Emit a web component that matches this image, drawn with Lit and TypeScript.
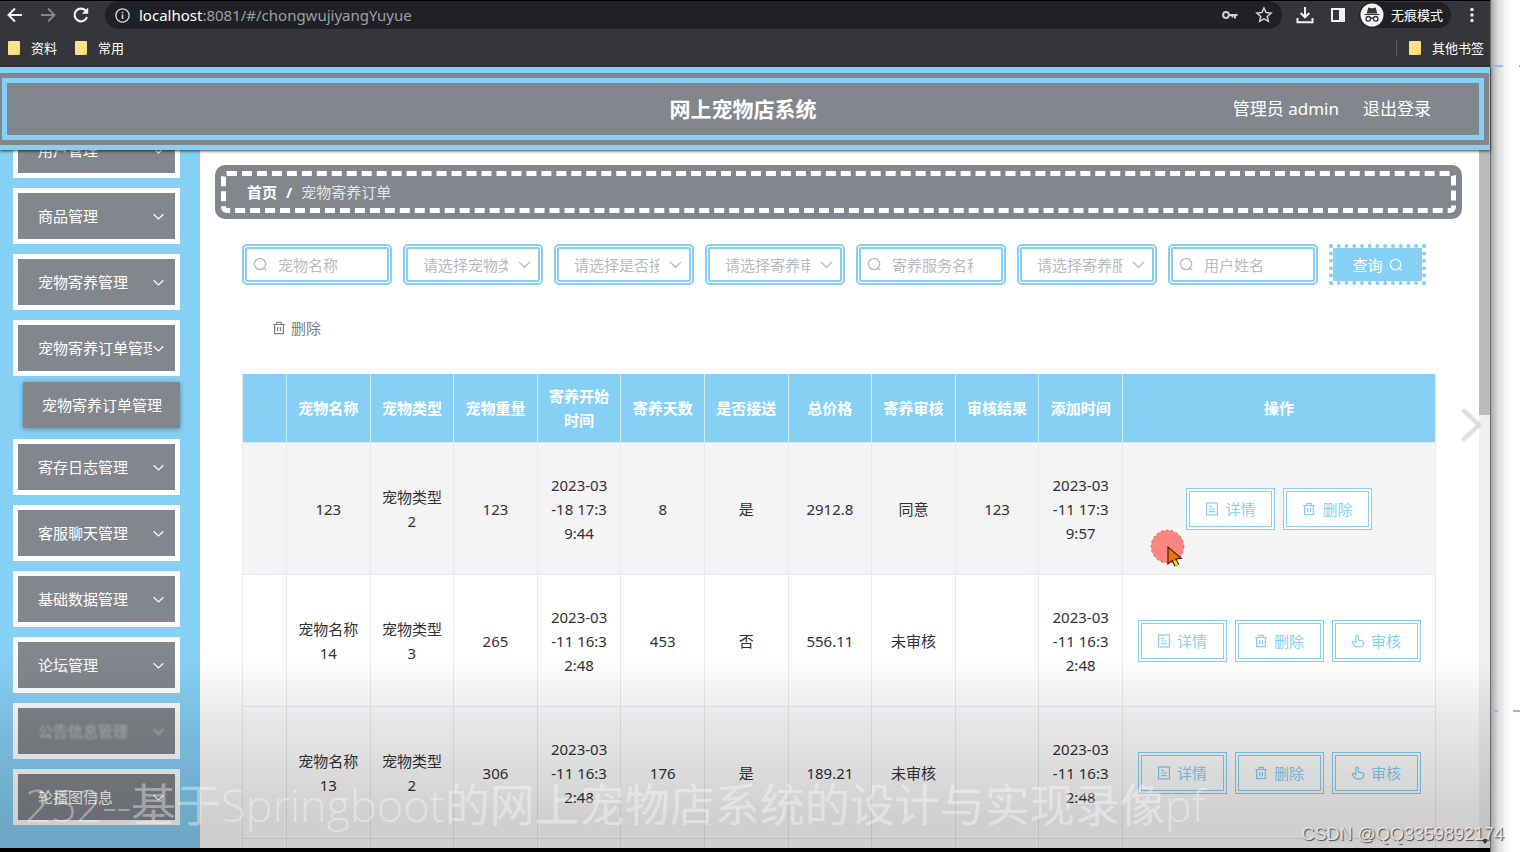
import { LitElement, html, css, svg } from "lit";
import { customElement, property } from "lit/decorators.js";

type Glyph = "search" | "trash" | "doc" | "point" | "down";

const glyphs = {
  search: svg`<circle cx="7.5" cy="7.5" r="6"/><path d="M11.6 11.6 14.2 14.2"/>`,
  trash: svg`<path d="M1 4h14M3 4v10.500h10V4M5.500 4V1.500h5V4M6.400 6.800v4.800M9.600 6.800v4.800"/>`,
  doc: svg`<rect x="1.800" y="1.200" width="12.400" height="13.600"/><path d="M4.800 5h3M4.800 8h6.400M4.800 11h6.400"/>`,
  point: svg`<path d="M5.600 9.800V2.600a1.400 1.400 0 0 1 2.800 0V7l4.600.9c1.200.3 1.800 1 1.600 2.200l-.6 2.600c-.3 1.200-1 1.900-2.200 1.900H6.600c-1 0-1.700-.3-2.300-1.100L1.600 9.800c-.5-.8.4-1.900 1.400-1.500z"/>`,
  down: svg`<path d="M2 5.200 8 11l6-5.800"/>`,
};

@customElement("line-icon")
class LineIcon extends LitElement {
  static styles = css`
    :host { display: inline-flex; flex: none; width: 14px; height: 14px; }
    svg { width: 100%; height: 100%; fill: none; stroke: currentColor; stroke-width: 1.4; }
  `;
  @property() name: Glyph = "search";
  render() {
    return html`<svg viewBox="0 0 16 16" aria-hidden="true">${glyphs[this.name]}</svg>`;
  }
}

interface Order {
  name: string[];
  type: string[];
  weight: string;
  start: string[];
  days: string;
  pickup: string;
  total: string;
  status: string;
  result: string;
  added: string[];
  review: boolean;
}

const orders: Order[] = [
  { name: ["123"], type: ["宠物类型", "2"], weight: "123", start: ["2023-03", "-18 17:3", "9:44"], days: "8", pickup: "是", total: "2912.8", status: "同意", result: "123", added: ["2023-03", "-11 17:3", "9:57"], review: false },
  { name: ["宠物名称", "14"], type: ["宠物类型", "3"], weight: "265", start: ["2023-03", "-11 16:3", "2:48"], days: "453", pickup: "否", total: "556.11", status: "未审核", result: "", added: ["2023-03", "-11 16:3", "2:48"], review: true },
  { name: ["宠物名称", "13"], type: ["宠物类型", "2"], weight: "306", start: ["2023-03", "-11 16:3", "2:48"], days: "176", pickup: "是", total: "189.21", status: "未审核", result: "", added: ["2023-03", "-11 16:3", "2:48"], review: true },
];

const columns: string[][] = [
  ["宠物名称"], ["宠物类型"], ["宠物重量"], ["寄养开始", "时间"], ["寄养天数"],
  ["是否接送"], ["总价格"], ["寄养审核"], ["审核结果"], ["添加时间"],
];

const filters = [
  { kind: "text", label: "宠物名称" },
  { kind: "select", label: "请选择宠物类型" },
  { kind: "select", label: "请选择是否接送" },
  { kind: "select", label: "请选择寄养审核" },
  { kind: "text", label: "寄养服务名称" },
  { kind: "select", label: "请选择寄养服务" },
  { kind: "text", label: "用户姓名" },
];

const menuTop = ["用户管理", "商品管理", "宠物寄养管理", "宠物寄养订单管理"];
const menuBottom = ["寄存日志管理", "客服聊天管理", "基础数据管理", "论坛管理", "公告信息管理", "轮播图信息"];

const lines = (parts: string[]) => parts.map((p, i) => (i ? html`<br />${p}` : p));

@customElement("app-root")
class AppRoot extends LitElement {
  static styles = css`
    :host {
      --sky: #87d0f5;
      --steel: #82878d;
      display: block;
      height: 100vh;
      overflow: hidden;
      font-family: "Noto Sans", "Noto Sans CJK SC", sans-serif;
      font-size: 15px;
      line-height: 24px;
      color: #303236;
    }
    * { box-sizing: border-box; }
    button, input, select { font: inherit; margin: 0; }
    button { cursor: pointer; }
    a { color: inherit; text-decoration: none; }

    .stage { position: relative; display: grid; grid-template-columns: minmax(0, 1fr) 30px; height: 100%; background: #fff; }
    .window { display: flex; flex-direction: column; min-width: 0; min-height: 0; background: #fff; border-bottom: 4px solid #000; }
    .margin { position: relative; border-left: 1px solid #6b6b6b; background: linear-gradient(90deg, #a8a8a8, #dcdcdc 7px, #f6f6f6 15px, #fff 22px); }
    .dash { position: absolute; height: 2px; background: #a3b6e6; }
    .dash.a { top: 65px; left: 2px; width: 10px; }
    .dash.b { top: 65px; right: 0; width: 1px; }
    .dash.c { top: 710px; left: 0; width: 7px; }
    .dash.d { top: 710px; right: 0; width: 7px; }

    .chrome { flex: none; background: #35363a; color: #fff; border-top: 1px solid #000; height: 67px; font-size: 13px; }
    .toolbar { display: flex; align-items: center; height: 28px; padding: 0 9px 0 6px; }
    .tool { display: inline-flex; align-items: center; justify-content: center; padding: 0; border: 0; background: none; color: #f1f1f1; width: 18px; height: 18px; }
    .tool svg { width: 18px; height: 18px; }
    .nav { display: flex; gap: 15px; }
    .nav .off { color: #85868a; }
    .pill { display: flex; align-items: center; flex: 1; height: 28px; margin: 0 14px 0 15px; padding: 0 9px; border-radius: 14px; background: #202124; gap: 8px; color: #d5d6d8; }
    .pill .tool { color: #d0d1d3; }
    .pill .star { margin-left: 8px; }
    .url { flex: 1; min-width: 0; border: 0; background: none; padding: 0; color: #9aa0a6; font-size: 15px; white-space: nowrap; }
    .url b { font-weight: 400; color: #fff; }
    .right { display: flex; align-items: center; gap: 15px; }
    .incognito { display: flex; align-items: center; gap: 7px; height: 26px; padding: 0 8px 0 1px; border-radius: 13px; background: #202124; }
    .incognito svg { width: 24px; height: 24px; }
    .right .incognito { margin-left: -3px; }
    .right .more { margin-left: -3px; }
    .marks { display: flex; align-items: center; height: 38px; padding: 0 6px 0 8px; gap: 18px; }
    .mark { display: flex; align-items: center; gap: 11px; }
    .mark i { width: 12px; height: 14px; border-radius: 1px; background: linear-gradient(135deg, #ffe287 70%, #f3c74e); }
    .other { margin-left: auto; border-left: 1px solid #5d5e62; padding-left: 12px; height: 16px; }

    .banner { flex: none; position: relative; z-index: 2; border: solid var(--sky); border-width: 6px 1px 5px 0; background: var(--steel); padding: 5px 5px 5px 2px; box-shadow: 0 1px 3px rgba(0, 0, 0, 0.75); }
    .banner-in { display: grid; grid-template-columns: 1fr auto 1fr; align-items: center; border: 5px solid var(--sky); height: 62px; color: #fff; }
    .banner h1 { grid-column: 2; margin: 0; font-size: 21px; line-height: 30px; font-weight: 700; }
    .who { display: flex; justify-content: flex-end; gap: 24px; padding-right: 48px; font-size: 17px; white-space: nowrap; }

    .body { flex: 1; min-height: 0; display: grid; grid-template-columns: 200px minmax(0, 1fr) 11px; }
    .side { background: var(--sky); overflow: hidden; padding: 0 20px 0 13px; }
    .menu { list-style: none; margin: 0; padding: 0; display: grid; grid-template-columns: minmax(0, 1fr); gap: 10px; }
    .menu.top { margin-top: -28px; }
    .item { display: flex; align-items: center; justify-content: space-between; width: 100%; height: 56px; padding: 0 10px 0 20px; border: 5px solid #fff; background: var(--steel); color: #fff; white-space: nowrap; text-align: left; }
    .item span { overflow: hidden; min-width: 0; }
    .item line-icon { width: 13px; height: 13px; }
    .item.faded span { filter: blur(1px); opacity: 0.4; }
    .item.faded line-icon { filter: blur(1px); opacity: 0.5; }
    .sub { display: flex; align-items: center; height: 46px; margin: 6px 0 11px 10px; padding-left: 19px; background: var(--steel); color: #fff; white-space: nowrap; box-shadow: 0 1px 5px rgba(0, 0, 0, 0.35); }

    .main { padding: 15px 17px 0 15px; overflow: hidden; }
    .crumb { padding: 6px; border-radius: 10px; background: var(--steel); }
    .crumb ol { list-style: none; margin: 0; display: flex; align-items: center; gap: 9px; height: 42px; padding: 0 21px; border: 5px dashed #fff; border-radius: 6px; color: #e3e5e7; }
    .crumb .home { color: #fff; font-weight: 700; }

    .filters { display: flex; gap: 11px; padding: 25px 0 0 27px; height: 66px; }
    .field { position: relative; flex: none; display: block; height: 41px; width: 150px; color: #b7bac0; }
    .field.pick { width: 140px; }
    .field input, .field select { width: 100%; height: 41px; border: 5px double var(--sky); border-radius: 5px; background: #fff; color: #b7bac0; padding: 0 28px 0 31px; outline: 0; }
    .field input::placeholder { color: #b7bac0; opacity: 1; }
    .field select { appearance: none; padding: 0 30px 0 15px; }
    .field line-icon { position: absolute; top: 13px; left: 11px; width: 15px; height: 15px; pointer-events: none; }
    .field.pick line-icon { left: auto; right: 11px; }
    .query { flex: none; display: flex; align-items: center; justify-content: center; gap: 6px; width: 97px; height: 41px; padding: 0; border: 4px dotted var(--sky); background: var(--sky) padding-box; color: #fff; }

    .actions { padding: 31px 0 34px 57px; }
    .remove { display: flex; align-items: center; gap: 5px; border: 0; padding: 0; background: none; color: #7d8187; }

    .wrap { padding: 0 26px 0 27px; }
    .grid { width: 100%; table-layout: fixed; border-collapse: separate; border-spacing: 0; border-left: 1px solid #e8eaf0; text-align: center; }
    .c-check { width: 44px; }
    .c-ops { width: 313px; }
    th, td { padding: 0; border: solid #e8eaf0; border-width: 0 1px 1px 0; }
    th { height: 69px; background: var(--sky); color: #fff; font-weight: 700; border-color: #d3eaf8; }
    td { height: 132px; }
    .hover td { background: #f4f4f5; }
    .ops { display: flex; justify-content: center; gap: 8px; }
    .op { display: flex; align-items: center; justify-content: center; gap: 6px; width: 89px; height: 42px; padding: 0; border: 4px double var(--sky); background: #fff; color: var(--sky); }

    .rail { background: #f0f0f1; display: flex; flex-direction: column; }
    .thumb { flex: none; height: 38%; background: #bcbcbd; }
    .rail i { margin: auto 1px 4px auto; border: 4px solid transparent; border-top: 5px solid #444; border-bottom: 0; }

    .shade { position: absolute; left: 0; right: 30px; bottom: 4px; height: 190px; background: linear-gradient(rgba(0, 0, 0, 0), rgba(0, 0, 0, 0.09) 32%, rgba(0, 0, 0, 0.19) 85%); pointer-events: none; z-index: 3; }
    .caption { position: absolute; left: 25px; bottom: 17px; z-index: 4; font-family: "Open Sans", "Noto Sans CJK SC", sans-serif; font-weight: 400; font-size: 45px; line-height: 60px; white-space: nowrap; color: rgba(255, 255, 255, 0.4); pointer-events: none; }
    .caption .thin { font-weight: 300; }
    .stamp { position: absolute; right: 16px; bottom: 6px; z-index: 5; font-family: "Liberation Sans", sans-serif; font-size: 18px; line-height: 24px; color: rgba(235, 235, 235, 0.9); text-shadow: 1px 1px 1px rgba(60, 60, 60, 0.9); white-space: nowrap; }
    .next { position: absolute; right: 36px; top: 406px; z-index: 3; width: 24px; height: 38px; padding: 0; border: 0; background: none; filter: drop-shadow(0 0 1px rgba(0, 0, 0, 0.25)); }
    .pointer { position: absolute; left: 1150px; top: 529px; z-index: 4; width: 36px; height: 40px; pointer-events: none; }
  `;

  private menuItem(label: string) {
    return html`<li>
      <button class="item ${label === "公告信息管理" ? "faded" : ""}"><span>${label}</span><line-icon name="down"></line-icon></button>
    </li>`;
  }

  private field(f: { kind: string; label: string }) {
    return f.kind === "text"
      ? html`<label class="field"><line-icon name="search"></line-icon><input type="text" aria-label=${f.label} placeholder=${f.label} /></label>`
      : html`<label class="field pick"><select aria-label=${f.label}><option>${f.label}</option></select><line-icon name="down"></line-icon></label>`;
  }

  private op(icon: Glyph, label: string) {
    return html`<button class="op"><line-icon name=${icon}></line-icon>${label}</button>`;
  }

  private row(o: Order, i: number) {
    return html`<tr class=${i === 0 ? "hover" : ""}>
      <td></td>
      <td>${lines(o.name)}</td>
      <td>${lines(o.type)}</td>
      <td>${o.weight}</td>
      <td>${lines(o.start)}</td>
      <td>${o.days}</td>
      <td>${o.pickup}</td>
      <td>${o.total}</td>
      <td>${o.status}</td>
      <td>${o.result}</td>
      <td>${lines(o.added)}</td>
      <td><div class="ops">${this.op("doc", "详情")}${this.op("trash", "删除")}${o.review ? this.op("point", "审核") : ""}</div></td>
    </tr>`;
  }

  private browserBar() {
    return html`<div class="chrome">
      <div class="toolbar">
        <div class="nav">
          <button class="tool" aria-label="后退"><svg viewBox="0 0 18 18" fill="none" stroke="currentColor" stroke-width="2"><path d="M16 9H3M9 2.500 2.500 9 9 15.500"/></svg></button>
          <button class="tool off" aria-label="前进"><svg viewBox="0 0 18 18" fill="none" stroke="currentColor" stroke-width="1.800"><path d="M2 9h13M9 2.500 15.500 9 9 15.500"/></svg></button>
          <button class="tool" aria-label="刷新"><svg viewBox="0 0 18 18" fill="none" stroke="currentColor" stroke-width="2.200"><path d="M15 11.200A6.400 6.400 0 1 1 13.600 4.500"/><path d="M16.200 1.500v6.300H9.900z" fill="currentColor" stroke="none"/></svg></button>
        </div>
        <div class="pill">
          <svg width="17" height="17" viewBox="0 0 17 17" fill="none" stroke="currentColor" stroke-width="1.400" aria-hidden="true"><circle cx="8.500" cy="8.500" r="6.600"/><path d="M8.500 7.600v4.400M8.500 4.800v1.500" stroke-width="1.600"/></svg>
          <div class="url"><b>localhost</b>:8081/#/chongwujiyangYuyue</div>
          <button class="tool" aria-label="密码"><svg viewBox="0 0 18 18" fill="none" stroke="currentColor" stroke-width="2"><circle cx="5" cy="9" r="2.900"/><path d="M8 9h8.500M14 9v3.500M11.500 9v2.500"/></svg></button>
          <button class="tool star" aria-label="收藏"><svg viewBox="0 0 18 18" fill="none" stroke="currentColor" stroke-width="1.500"><path d="m9 2 2.100 4.600 5 .5-3.800 3.300 1.100 4.900L9 12.800l-4.400 2.500 1.100-4.900L1.900 7.100l5-.5z"/></svg></button>
        </div>
        <div class="right">
          <button class="tool" aria-label="下载"><svg viewBox="0 0 18 18" fill="none" stroke="currentColor" stroke-width="2"><path d="M9 1v10M4.700 7 9 11.300 13.300 7M1.500 12v4.200h15V12"/></svg></button>
          <button class="tool" aria-label="侧边栏"><svg viewBox="0 0 18 18"><path d="M2 2h14v14H2zM4 4v10h6V4z" fill="currentColor" fill-rule="evenodd"/></svg></button>
          <div class="incognito">
            <svg viewBox="0 0 24 24" aria-hidden="true"><circle cx="12" cy="12" r="11.500" fill="#f4f4f4"/><path d="M4.500 11.500h15M7.500 10l1.200-4.700 3.300.8 3.300-.8L16.500 10z" fill="#35363a" stroke="#35363a" stroke-width="1.200"/><g fill="none" stroke="#35363a" stroke-width="1.300"><circle cx="8.300" cy="15.800" r="2.300"/><circle cx="15.700" cy="15.800" r="2.300"/><path d="M10.600 15.500c.9-.6 1.900-.6 2.800 0"/></g></svg>
            <span>无痕模式</span>
          </div>
          <button class="tool more" aria-label="更多"><svg viewBox="0 0 18 18" fill="currentColor"><circle cx="9" cy="3.500" r="1.700"/><circle cx="9" cy="9" r="1.700"/><circle cx="9" cy="14.500" r="1.700"/></svg></button>
        </div>
      </div>
      <div class="marks">
        <a class="mark" href="#"><i></i>资料</a>
        <a class="mark" href="#"><i></i>常用</a>
        <a class="mark other" href="#"><i></i>其他书签</a>
      </div>
    </div>`;
  }

  render() {
    return html`<div class="stage">
      <div class="window">
        ${this.browserBar()}
        <header class="banner">
          <div class="banner-in">
            <h1>网上宠物店系统</h1>
            <div class="who"><span>管理员 admin</span><a href="#">退出登录</a></div>
          </div>
        </header>
        <div class="body">
          <nav class="side">
            <ul class="menu top">${menuTop.map((m) => this.menuItem(m))}</ul>
            <a class="sub" href="#">宠物寄养订单管理</a>
            <ul class="menu">${menuBottom.map((m) => this.menuItem(m))}</ul>
          </nav>
          <main class="main">
            <nav class="crumb"><ol><li class="home">首页</li><li class="home">/</li><li>宠物寄养订单</li></ol></nav>
            <form class="filters" @submit=${(e: Event) => e.preventDefault()}>
              ${filters.map((f) => this.field(f))}
              <button class="query">查询<line-icon name="search"></line-icon></button>
            </form>
            <div class="actions"><button class="remove"><line-icon name="trash"></line-icon>删除</button></div>
            <div class="wrap">
              <table class="grid">
                <colgroup><col class="c-check" />${columns.map(() => html`<col />`)}<col class="c-ops" /></colgroup>
                <thead><tr><th></th>${columns.map((c) => html`<th scope="col">${lines(c)}</th>`)}<th scope="col">操作</th></tr></thead>
                <tbody>
                  ${orders.map((o, i) => this.row(o, i))}
                  <tr><td></td>${columns.map(() => html`<td></td>`)}<td></td></tr>
                </tbody>
              </table>
            </div>
          </main>
          <div class="rail"><div class="thumb"></div><i></i></div>
        </div>
      </div>
      <div class="margin"><i class="dash a"></i><i class="dash b"></i><i class="dash c"></i><i class="dash d"></i></div>
      <div class="shade"></div>
      <div class="caption"><span class="thin">252--</span>基于<span class="thin">Springboot</span>的网上宠物店系统的设计与实现录像<span class="thin">pf</span></div>
      <div class="stamp">CSDN @QQ3359892174</div>
      <button class="next" aria-label="下一张"><svg width="24" height="38" viewBox="0 0 24 38" fill="none" stroke="#dedede" stroke-width="3"><path d="M3 4l16 15L3 34"/></svg></button>
      <svg class="pointer" viewBox="0 0 36 40" aria-hidden="true">
        <circle cx="17.500" cy="17.500" r="16.300" fill="#ff8580" stroke="#d9534f" stroke-width="1" stroke-dasharray="2 3"/>
        <path d="M18 18v17l4.200-3.600 2.600 5.400 3.700-1.900-2.700-4.900 5.400-.6z" fill="#e8780c" stroke="#5a1c00" stroke-width="1.200"/>
        <path d="m23.500 32.500 2 4.200 2.500-1.300-2-4z" fill="#e5e51c"/>
      </svg>
    </div>`;
  }
}
